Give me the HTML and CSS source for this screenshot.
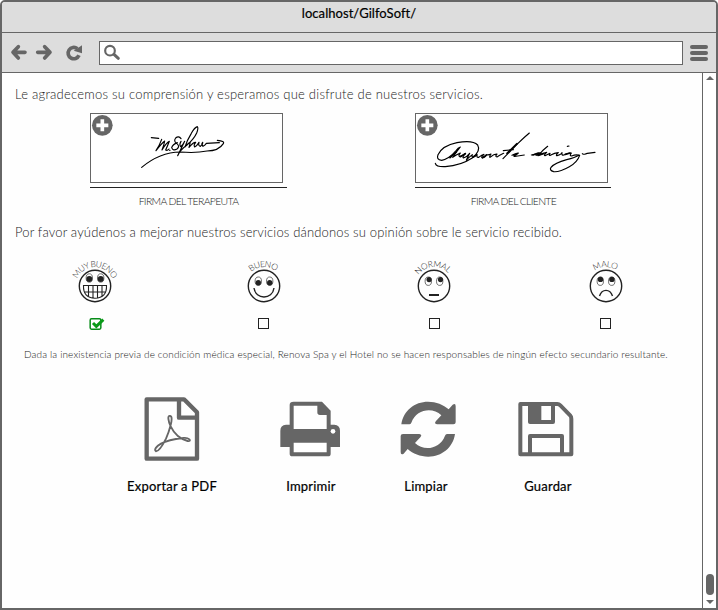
FILE: index.html
```html
<!DOCTYPE html>
<html lang="es">
<head>
<meta charset="utf-8">
<title>localhost/GilfoSoft/</title>
<link rel="stylesheet" href="styles.css">
</head>
<body>
<div class="window">
  <header class="titlebar"><span class="address">localhost/GilfoSoft/</span></header>
  <nav class="toolbar">
    <svg class="nav-icons" viewBox="30 123 222 72">
      <g fill="none" stroke="#666" stroke-width="11" stroke-linecap="round" stroke-linejoin="round">
        <path d="M75 157H40M55 140L39 157L55 174"/>
        <path d="M113 157H148M134 140L150 157L134 174"/>
        <path d="M232 146A17 17 0 1 0 237 166" stroke-linecap="butt"/>
      </g>
      <path d="M246 136V160L221 152Z" fill="#666"/>
    </svg>
    <div class="url">
      <svg class="search" viewBox="306 129 60 60" fill="none" stroke="#666" stroke-linecap="round">
        <circle cx="330" cy="152" r="14.5" stroke-width="6.5"/><path d="M342 163L355 175" stroke-width="9"/>
      </svg>
    </div>
    <div class="menu"><i></i><i></i><i></i></div>
  </nav>
  <div class="viewport">
    <main class="page">
      <p class="line thanks">Le agradecemos su comprensión y esperamos que disfrute de nuestros servicios.</p>
      <section class="signatures">
        <figure class="signature">
          <svg class="pad" viewBox="30 24 579 210">
            <rect x="31.5" y="25.5" width="576" height="207" fill="#fff" stroke="#666" stroke-width="3"/>
            <circle cx="67" cy="61" r="31" fill="#666"/><path d="M67 43V79M49 61H85" stroke="#fff" stroke-width="11"/>
            <g fill="none" stroke="#000" stroke-width="3.500" stroke-linecap="round" stroke-linejoin="round">
              <path d="M214 98L236 100M245 103Q239 120 228 137Q243 117 254 108Q252 121 246 135Q258 115 268 109Q263 122 257 135Q262 138 267 132M269 136h1"/>
              <path d="M303 101Q296 91 287 99Q280 109 290 115Q301 124 291 132Q279 139 275 128Q278 118 292 113M303 109Q297 119 302 125Q310 119 314 109L293 152Q300 135 321 120Q342 102 350 84Q356 68 352 65Q344 67 334 85Q321 106 315 126Q325 114 331 111Q329 121 327 127Q340 111 347 112Q340 119 344 126Q351 123 357 112Q354 123 361 124Q370 115 368 112Q363 116 369 124Q375 121 379 115L418 113"/>
              <path d="M412 106Q435 108 430 116Q416 138 381 138Q348 145 301 141Q239 142 185 187"/>
            </g>
          </svg>
          <div class="rule"></div>
          <figcaption>FIRMA DEL TERAPEUTA</figcaption>
        </figure>
        <figure class="signature">
          <svg class="pad" viewBox="45 24 579 210">
            <rect x="46.5" y="25.5" width="576" height="207" fill="#fff" stroke="#666" stroke-width="3"/>
            <circle cx="82" cy="61" r="31" fill="#666"/><path d="M82 43V79M64 61H100" stroke="#fff" stroke-width="11"/>
            <g fill="none" stroke="#000" stroke-width="3.500" stroke-linecap="round" stroke-linejoin="round">
              <path d="M106 175Q108 186 136 185Q183 181 218 158Q243 137 233 120Q218 104 171 113Q127 122 114 149Q108 164 125 166Q148 161 169 136Q174 128 181 126Q166 145 158 157Q168 149 181 144Q174 151 179 155Q190 151 196 145Q186 157 190 159Q202 155 209 145L199 165Q207 157 217 149Q214 157 220 157Q230 150 231 149Q229 158 236 157Q246 149 252 148Q242 156 247 159Q258 156 259 149Q266 151 273 147Q267 156 270 157Q282 147 291 147Q284 155 291 156Q306 147 311 145"/>
              <path d="M388 84Q378 92 354 115L309 161M310 137L340 134M336 151Q352 143 355 144Q348 151 342 151Q339 156 353 153L373 150"/>
              <path d="M394 150Q410 147 420 143Q415 151 408 151M443 124Q427 136 416 151Q427 145 440 142Q430 151 435 152L450 145Q445 152 451 151Q464 144 475 143Q466 151 471 152Q485 148 486 143Q484 152 492 150Q505 143 514 144Q507 152 515 153Q527 148 539 151Q532 172 508 185Q478 202 461 200Q447 196 453 187Q464 174 500 164Q526 158 537 150M502 124L507 123M547 146Q554 150 562 145L585 142"/>
              <path d="M351 116L321 145M150 158L169 141M181 155L196 146M219 156L230 150M247 158L258 151M399 150L415 144M414 151L430 146M496 148L510 144" stroke-width="5"/>
            </g>
          </svg>
          <div class="rule"></div>
          <figcaption>FIRMA DEL CLIENTE</figcaption>
        </figure>
      </section>
      <p class="line opinion">Por favor ayúdenos a mejorar nuestros servicios dándonos su opinión sobre le servicio recibido.</p>
      <section class="ratings">
        <div class="rating">
          <svg class="face" viewBox="-30 -36 60 56">
            <path id="arc1" d="M-19 6V0A19 19 0 0 1 19 0V6" fill="none"/>
            <text><textPath href="#arc1" startOffset="50%" textLength="45">MUY BUENO</textPath></text>
            <circle r="15.7" class="ink"/>
            <ellipse cx="-5.7" cy="-8" rx="3.2" ry="4.2" class="thin"/><ellipse cx="5.7" cy="-8" rx="3.2" ry="4.2" class="thin"/>
            <circle cx="-5.7" cy="-7" r="3"/><circle cx="5.7" cy="-7" r="3"/>
            <path class="ink teeth" d="M-11.5 -.5H11.5Q12 12 0 12.3Q-12 12 -11.500 -.5ZM-11 6H11M-6.500 0V10M-2 0V12M2.500 0V12M7 0V10"/>
          </svg>
          <svg class="tick" viewBox="267 290 48 42"><rect x="270.5" y="295.5" width="32" height="31" rx="4" fill="#fff" stroke="#078c18" stroke-width="4.500"/><path d="M279 308L289 318L310 298" fill="none" stroke="#0a9a18" stroke-width="9"/></svg>
        </div>
        <div class="rating">
          <svg class="face" viewBox="-30 -36 60 56">
            <path id="arc2" d="M-19 0A19 19 0 0 1 19 0" fill="none"/>
            <text><textPath href="#arc2" startOffset="49%" textLength="27">BUENO</textPath></text>
            <circle r="15.7" class="ink"/>
            <ellipse cx="-5.7" cy="-4.8" rx="3.2" ry="4.2" class="thin"/><ellipse cx="5.7" cy="-4.8" rx="3.2" ry="4.2" class="thin"/>
            <circle cx="-5.7" cy="-3.2" r="2.7"/><circle cx="5.7" cy="-3.2" r="2.7"/>
            <path class="ink" d="M-10 2C-8.5 14 8.500 14 10 2"/>
          </svg>
          <span class="box nudged"></span>
        </div>
        <div class="rating">
          <svg class="face" viewBox="-30 -36 60 56">
            <path id="arc3" d="M-19 0A19 19 0 0 1 19 0" fill="none"/>
            <text><textPath href="#arc3" startOffset="48%" textLength="34">NORMAL</textPath></text>
            <circle r="15.7" class="ink"/>
            <ellipse cx="-5.7" cy="-4.8" rx="3.2" ry="4.2" class="thin"/><ellipse cx="5.7" cy="-4.8" rx="3.2" ry="4.2" class="thin"/>
            <circle cx="-4.9" cy="-6.4" r="2.6"/><circle cx="6.5" cy="-6.4" r="2.6"/>
            <path class="ink dash" d="M-5 9H5"/>
          </svg>
          <span class="box"></span>
        </div>
        <div class="rating">
          <svg class="face" viewBox="-30 -36 60 56">
            <path id="arc4" d="M-19 0A19 19 0 0 1 19 0" fill="none"/>
            <text><textPath href="#arc4" startOffset="49%" textLength="23">MALO</textPath></text>
            <circle r="15.7" class="ink"/>
            <ellipse cx="-5.7" cy="-4.8" rx="3.2" ry="4.2" class="thin"/><ellipse cx="5.7" cy="-4.8" rx="3.2" ry="4.2" class="thin"/>
            <circle cx="-5.5" cy="-6.6" r="2.7"/><circle cx="5.9" cy="-6.6" r="2.7"/>
            <path class="ink" d="M-6.5 10C-4 2.500 4 2.500 6.500 10"/>
          </svg>
          <span class="box nudged"></span>
        </div>
      </section>
      <p class="notice">Dada la inexistencia previa de condición médica especial, Renova Spa y el Hotel no se hacen responsables de ningún efecto secundario resultante.</p>
      <section class="actions">
        <div class="action a1">
          <svg viewBox="96 15 180 204" fill="none" stroke="#666" stroke-linejoin="round">
            <path d="M110 28H222L261 67V206H110Z M207 28V83H261" stroke-width="13"/>
            <path d="M181 78C171 75 175 94 182 109C193 132 211 147 233 153C247 155 238 141 218 144C194 147 170 152 153 161C139 169 131 179 138 184C147 184 158 166 168 146C177 126 192 80 181 78Z" stroke-width="5.500"/>
          </svg>
          <span>Exportar a PDF</span>
        </div>
        <div class="action a2">
          <svg viewBox="507 15 186 204">
            <path d="M551 35H636L662 62V104H673Q690 105 690 122V171H662V191Q662 199 654 199H547Q539 199 539 191V171H511V122Q511 105 528 104H539V44Q539 35 551 35Z" fill="#666"/>
            <path d="M551 47H622V67Q622 75 630 75H650V117H551ZM551 158H650V187H551Z" fill="#fff"/><circle cx="669" cy="124" r="7" fill="#fff"/>
          </svg>
          <span>Imprimir</span>
        </div>
        <div class="action a3">
          <svg viewBox="54 15 180 204" fill="#666">
            <path id="turn" d="M64 103C70 62 104 35 144 35C169 35 190 44 206 58L218 44Q227 38 227 49V97Q227 103 220 103H171Q161 101 168 93L184 76C157 50 109 58 94 98Q92 103 88 103Z"/>
            <use href="#turn" transform="rotate(180 144.5 117.5)"/>
          </svg>
          <span>Limpiar</span>
        </div>
        <div class="action a4">
          <svg viewBox="408 15 180 204" fill="none" stroke="#666" stroke-linejoin="round">
            <path d="M421 42H532Q537 42 541 46L571 77Q574 80 574 87V193H421Z" stroke-width="12"/>
            <path d="M450 43V96H519V43M450 192V138H546V192" stroke-width="12"/><path d="M446 42H484V98H446Z" fill="#666" stroke="none"/>
          </svg>
          <span>Guardar</span>
        </div>
      </section>
    </main>
    <aside class="scrollbar"><i class="up"></i><i class="thumb"></i><i class="down"></i></aside>
  </div>
</div>
</body>
</html>
```
FILE: styles.css
```css
* { box-sizing: border-box; }
body { margin: 0; background: #fff; font-family: Lato, "Open Sans", sans-serif; }
p, figure { margin: 0; }
svg { display: block; }
.window { width: 718px; height: 610px; border: 2px solid #666; border-radius: 5px 5px 0 0; background: #fefefe; overflow: hidden; display: flex; flex-direction: column; }
.titlebar { height: 31px; background: #ddd; border-bottom: 1px solid #666; text-align: center; color: #000; font-size: 13px; line-height: 22px; white-space: nowrap; }
.address { letter-spacing: .05px; -webkit-text-stroke: .2px #000; }
.toolbar { height: 40px; background: #ddd; border-bottom: 1px solid #666; display: flex; align-items: center; padding: 0 6px 0 8px; }
.nav-icons { width: 74px; height: 24px; }
.url { width: 584px; height: 24px; margin-left: 15px; background: #fff; border: 1px solid #666; }
.search { width: 20px; height: 20px; margin: 1px 0 0 2px; }
.menu { width: 18px; margin-left: 7px; display: flex; flex-direction: column; gap: 2px; }
.menu i { height: 4px; border-radius: 2px; background: #666; }
.viewport { flex: 1; display: flex; min-height: 0; }
.page { width: 700px; white-space: nowrap; color: #222; font-weight: 300; }
.line { padding-left: 13px; font-size: 13px; line-height: 20px; }
.thanks { margin-top: 11px; letter-spacing: .24px; }
.signatures { display: grid; grid-template-columns: 325px 197px; padding-left: 88px; margin-top: 9px; }
.signature { width: 197px; }
.pad { width: 193px; height: 70px; }
.rule { height: 1px; background: #222; margin-top: 4px; }
.signature:last-child .rule { width: 196px; }
figcaption { font-size: 10.5px; line-height: 16px; margin-top: 5px; text-align: center; letter-spacing: -.7px; }
.opinion { margin-top: 13px; letter-spacing: .16px; }
.ratings { display: grid; grid-template-columns: 169px 170px 172px 60px; padding-left: 63px; margin-top: 8px; }
.rating { width: 60px; display: flex; flex-direction: column; align-items: center; }
.face { width: 60px; height: 56px; overflow: visible; }
.face text { font-size: 8.5px; text-anchor: middle; fill: #222; }
.face circle, .face ellipse { fill: #222; }
.face .ink { fill: none; stroke: #222; stroke-width: 1.4; }
.face .teeth { stroke-width: 1.1; }
.face .dash { stroke-width: 2; }
.face .thin { fill: #fff; stroke: #333; stroke-width: .7; }
.box { width: 11px; height: 11px; border: 1px solid #222; background: #fff; margin-top: 12px; }
.nudged { margin-right: 2px; }
.tick { width: 16px; height: 14px; margin: 11px 0 0 4px; }
.notice { font-size: 10px; line-height: 16px; padding-left: 22px; margin-top: 15px; height: 16px; letter-spacing: .125px; }
.actions { display: grid; grid-template-columns: 139px 115px 122px 92px; padding-left: 124px; margin-top: 33px; }
.action { width: 92px; display: flex; flex-direction: column; align-items: center; color: #000; font-size: 13px; font-weight: 400; }
.action svg { width: 60px; height: 68px; }
.action.a2 svg { width: 62px; margin-right: 2px; }
.a3 svg { margin-left: 4px; }
.a4 svg { margin-right: 4px; }
.action span { line-height: 18px; margin-top: 14px; letter-spacing: .2px; -webkit-text-stroke: .2px #000; }
.scrollbar { width: 14px; border-left: 1px solid #666; background: #fff; display: flex; flex-direction: column; align-items: center; }
.up, .down { border: 4px solid transparent; border-top: 0; border-bottom: 4px solid #666; margin-top: 3px; }
.thumb { width: 8px; height: 21px; border-radius: 4px; background: #666; margin-top: auto; }
.down { border-bottom: 0; border-top: 4px solid #666; margin: 5px 0 4px; }
```
